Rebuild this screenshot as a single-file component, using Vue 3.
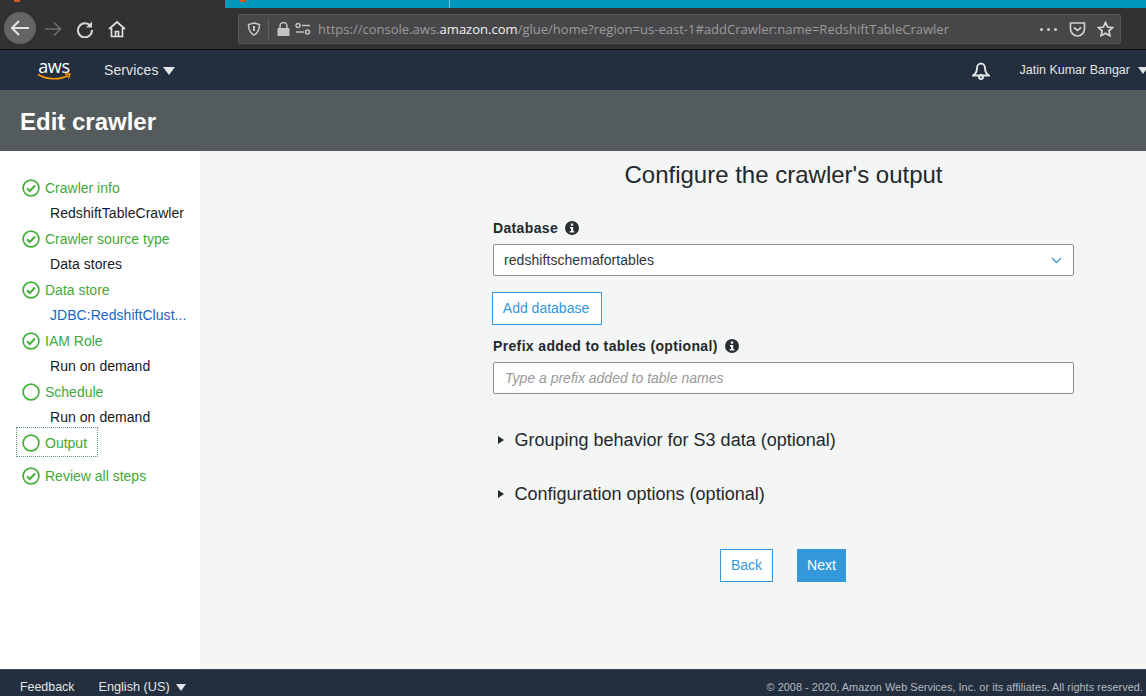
<script setup>
const steps = [
  { label: 'Crawler info', sub: 'RedshiftTableCrawler', done: true },
  { label: 'Crawler source type', sub: 'Data stores', done: true },
  { label: 'Data store', sub: 'JDBC:RedshiftClust...', done: true, link: true },
  { label: 'IAM Role', sub: 'Run on demand', done: true },
  { label: 'Schedule', sub: 'Run on demand', done: false },
  { label: 'Output', done: false, focus: true },
  { label: 'Review all steps', done: true, last: true },
]
</script>

<template>
  <div class="page">
    <div class="tabs">
      <div class="tabs-left"><span class="fav"></span></div>
      <div class="tab-active"><span class="fav fav2"></span></div>
      <div class="tab-rest"></div>
    </div>
    <div class="toolbar">
      <div class="back">
        <svg width="24" height="24" viewBox="0 0 24 24" fill="none" stroke="#e4e4e4" stroke-width="2"><path d="M21 12H4M11 5l-7 7 7 7"/></svg>
      </div>
      <svg class="fwd" width="18" height="18" viewBox="0 0 18 18" fill="none" stroke="#6e6e6e" stroke-width="1.7"><path d="M1 9h15M10 2.500l6.500 6.500-6.500 6.500"/></svg>
      <svg class="reload" width="18" height="18" viewBox="0 0 18 18" fill="none" stroke="#d8d8d8" stroke-width="2"><path d="M14.500 6A7 7 0 1 0 16 10"/><path d="M16 1.500v6h-6" fill="#d8d8d8" stroke="none"/></svg>
      <svg class="home" width="18" height="18" viewBox="0 0 18 18" fill="none" stroke="#e0e0e0" stroke-width="1.700"><path d="M1 9l8-7 8 7M3.500 8v8.500h11V8"/><path d="M7.500 16.500v-5h3v5"/></svg>
      <div class="urlbar">
        <svg class="shield" width="14" height="14" viewBox="0 0 14 14" fill="none" stroke="#c8c8c8" stroke-width="1.500"><path d="M7 1l5.500 1.500c0 5-1.500 8.500-5.500 10.500C3 11 1.500 7.500 1.500 2.500z"/><path d="M7 4v5" stroke-width="2"/></svg>
        <span class="sep"></span>
        <svg class="lock" width="13" height="14" viewBox="0 0 13 14"><path d="M3 6V4a3.500 3.500 0 0 1 7 0v2" fill="none" stroke="#c4c4c4" stroke-width="1.500"/><rect x="0.500" y="6" width="12" height="8" rx="1" fill="#c4c4c4"/></svg>
        <svg class="perm" width="16" height="14" viewBox="0 0 16 14" fill="none" stroke="#c0c0c0" stroke-width="1.500"><circle cx="3" cy="3.500" r="2"/><path d="M7 3.500h8M1 10h8"/><circle cx="12.500" cy="10" r="2"/></svg>
        <span class="url">https://console.aws.<b>amazon.com</b>/glue/home?region=us-east-1#addCrawler:name=RedshiftTableCrawler</span>
        <span class="dots"><i></i><i></i><i></i></span>
        <svg class="pocket" width="17" height="15" viewBox="0 0 17 15" fill="none" stroke="#cfcfcf" stroke-width="1.700"><path d="M1.500 1h14v6a6.500 6.500 0 0 1-14 0z"/><path d="M5 5.500l3.500 3 3.500-3"/></svg>
        <svg class="star" width="17" height="16" viewBox="0 0 17 16" fill="none" stroke="#d8d8d8" stroke-width="1.700"><path d="M8.500 1.500l2.100 4.500 4.900.6-3.600 3.300 1 4.800-4.400-2.400-4.400 2.400 1-4.800L1.500 6.600l4.900-.6z"/></svg>
      </div>
    </div>

    <nav class="nav">
      <div class="logo">
        <span class="logo-text">aws</span>
        <svg width="34" height="8" viewBox="0 0 34 8" fill="none"><path d="M1 1.500C10 7 23 7 31 2.500" stroke="#f90" stroke-width="1.600"/><path d="M28 1h5l-1.500 4.500" stroke="#f90" stroke-width="1.300"/></svg>
      </div>
      <span class="services">Services</span>
      <span class="caret"></span>
      <span class="spacer"></span>
      <svg class="bell" width="18" height="18" viewBox="0 0 18 18" fill="none" stroke="#e2e4e6" stroke-width="1.900"><path d="M1 13.500c2.500-1.500 4-4 4-7.500 0-2.500 1.800-4.500 4-4.500s4 2 4 4.500c0 3.500 1.500 6 4 7.500z"/><circle cx="9" cy="15" r="2"/></svg>
      <span class="user">Jatin Kumar Bangar</span>
      <span class="caret small"></span>
    </nav>

    <header class="head"><h1>Edit crawler</h1></header>

    <main class="body">
      <aside class="side">
        <template v-for="s in steps" :key="s.label">
          <div class="step" :class="{ focus: s.focus, last: s.last }">
            <svg class="mark" width="18" height="18" viewBox="0 0 18 18" fill="none">
              <circle cx="9" cy="9" r="7.900" stroke="#44b03b" stroke-width="1.700"/>
              <path v-if="s.done" d="M5 9.300l2.800 2.700L13 6.500" stroke="#44b03b" stroke-width="2"/>
            </svg>
            <span>{{ s.label }}</span>
          </div>
          <div v-if="s.sub" class="sub" :class="{ link: s.link }">{{ s.sub }}</div>
        </template>
      </aside>

      <section class="content">
        <h2>Configure the crawler's output</h2>
        <div class="form">
          <label class="lbl">Database
            <svg class="info" width="14" height="14" viewBox="0 0 14 14"><circle cx="7" cy="7" r="7" fill="#2a2e33"/><rect x="5.800" y="2.500" width="2.400" height="2.200" fill="#f4f6f6"/><path d="M5 6h3.200v4H9.300v1.500H4.800V10H6V7.400H5z" fill="#f4f6f6"/></svg>
          </label>
          <div class="select">
            <span>redshiftschemafortables</span>
            <svg width="11" height="7" viewBox="0 0 11 7" fill="none" stroke="#3f97d6" stroke-width="1.300"><path d="M1 1l4.500 4.500L10 1"/></svg>
          </div>
          <button class="btn add">Add database</button>
          <label class="lbl lbl2">Prefix added to tables (optional)
            <svg class="info" width="14" height="14" viewBox="0 0 14 14"><circle cx="7" cy="7" r="7" fill="#2a2e33"/><rect x="5.800" y="2.500" width="2.400" height="2.200" fill="#f4f6f6"/><path d="M5 6h3.200v4H9.300v1.500H4.800V10H6V7.400H5z" fill="#f4f6f6"/></svg>
          </label>
          <div class="input">Type a prefix added to table names</div>
          <div class="expander first"><span class="tri"></span>Grouping behavior for S3 data (optional)</div>
          <div class="expander"><span class="tri"></span>Configuration options (optional)</div>
          <div class="actions">
            <button class="btn back-btn">Back</button>
            <button class="btn next">Next</button>
          </div>
        </div>
      </section>
    </main>

    <footer class="foot">
      <span class="fb">Feedback</span>
      <span class="lang">English (US)</span>
      <span class="caret small foot-caret"></span>
      <span class="spacer"></span>
      <span class="copy">© 2008 - 2020, Amazon Web Services, Inc. or its affiliates. All rights reserved.</span>
    </footer>
  </div>
</template>

<style>
html, body { margin: 0; overflow: hidden; }
</style>

<style scoped>
.page { width: 1146px; height: 696px; display: flex; flex-direction: column; font-family: "Liberation Sans", Arial, sans-serif; overflow: hidden; background: #f4f6f6; }
.tabs { height: 8px; display: flex; flex: none; background: #323234; }
.tabs-left { width: 225px; position: relative; }
.tab-active { width: 224px; background: #0097bd; position: relative; }
.tab-rest { flex: 1; background: #0097bd; border-left: 1px solid #7cc4d8; }
.fav { position: absolute; left: 14px; top: 0; width: 6px; height: 2px; background: #d8591c; }
.fav2 { left: 15px; }
.toolbar { height: 41px; flex: none; background: #323234; border-bottom: 1px solid #0c0c0d; display: flex; align-items: center; position: relative; }
.back { width: 32px; height: 32px; border-radius: 50%; background: #646466; margin-left: 4px; display: flex; align-items: center; justify-content: center; margin-top: -1px; }
.fwd { margin-left: 8px; }
.reload { margin-left: 14px; }
.home { margin-left: 14px; }
.urlbar { margin-left: 112px; width: 883px; height: 30px; box-sizing: border-box; background: #474749; border: 1px solid #565658; border-radius: 2px; display: flex; align-items: center; margin-top: 1px; }
.shield { margin-left: 8px; flex: none; }
.sep { width: 1px; height: 22px; background: #5e5e60; margin-left: 7px; flex: none; }
.lock { margin-left: 8px; flex: none; }
.perm { margin-left: 5px; flex: none; }
.url { margin-left: 7px; font-family: "Open Sans", sans-serif; font-size: 13.040px; color: #9a9a9b; white-space: nowrap; flex: 1; }
.url b { font-weight: 400; color: #f0f0f0; }
.dots { display: flex; gap: 3px; margin-right: 12px; }
.dots i { width: 3px; height: 3px; border-radius: 50%; background: #cfcfcf; margin-left: 1px; }
.pocket { margin-right: 11px; flex: none; }
.star { margin-right: 6px; flex: none; }

.nav { height: 40px; flex: none; background: #232f3e; display: flex; align-items: center; color: #e2e4e6; }
.logo { margin-left: 36px; width: 36px; display: flex; flex-direction: column; align-items: center; }
.logo-text { font-family: "Open Sans", sans-serif; font-size: 18px; line-height: 14px; color: #fff; letter-spacing: -0.3px; }
.services { margin-left: 32px; font-size: 14px; letter-spacing: 0.1px; }
.caret { margin-left: 5px; margin-top: 1px; width: 0; height: 0; border-left: 6px solid transparent; border-right: 6px solid transparent; border-top: 8px solid #e2e4e6; }
.caret.small { border-left-width: 5px; border-right-width: 5px; border-top-width: 7px; }
.spacer { flex: 1; }
.bell { margin-right: 30px; margin-top: 2px; }
.user { font-size: 12.500px; }
.nav .caret.small { margin-right: -2px; margin-left: 8px; }

.head { height: 61px; flex: none; background: #545b5c; display: flex; align-items: center; }
.head h1 { margin: 2px 0 0 20px; font-size: 24px; font-weight: 700; color: #fff; }

.body { flex: 1; display: flex; min-height: 0; }
.side { width: 200px; flex: none; background: #fff; box-sizing: border-box; padding-top: 24px; }
.step { display: flex; align-items: center; height: 26px; margin-left: 16px; padding-left: 6px; width: 82px; box-sizing: border-box; color: #3fa93a; font-size: 14px; white-space: nowrap; gap: 5px; line-height: 26px; }
.mark { flex: none; }
.step.focus { height: 30px; outline: 1px dotted #6a9a76; outline-offset: -1px; margin-top: -3px; padding-top: 2px; }
.step.last { margin-top: 6px; }
.sub { margin-left: 50px; font-size: 14px; color: #16191f; height: 25px; line-height: 25px; white-space: nowrap; letter-spacing: 0.05px; }
.sub.link { color: #1a66c0; }

.content { flex: 1; padding-left: 293px; }
.content h2 { margin: 0; width: 581px; text-align: center; font-size: 24px; font-weight: 400; color: #23282c; line-height: 28px; padding-top: 10px; }
.form { width: 581px; padding-top: 29px; }
.lbl { display: flex; align-items: center; gap: 7px; font-size: 14px; font-weight: 700; color: #23282c; height: 20px; letter-spacing: 0.35px; }
.lbl2 { margin-top: 11px; }
.select, .input { height: 32px; box-sizing: border-box; background: #fff; border: 1px solid #8a8f8f; border-radius: 2px; display: flex; align-items: center; font-size: 14px; margin-top: 6px; padding: 0 11px 0 10px; color: #333; }
.select { justify-content: space-between; letter-spacing: 0.06px; }
.input { font-style: italic; color: #999; padding-left: 11px; }
.btn { font-family: inherit; font-size: 14px; box-sizing: border-box; border-radius: 0; padding: 0 0 2px; }
.add { display: block; margin-top: 16px; margin-left: -1px; width: 110px; height: 33px; background: #fff; border: 1px solid #3498db; color: #3498db; padding-right: 2px; }
.expander { font-size: 18px; color: #23282c; display: flex; align-items: center; height: 24px; margin-top: 30px; }
.expander.first { margin-top: 34px; }
.tri { width: 0; height: 0; border-top: 4.500px solid transparent; border-bottom: 4.500px solid transparent; border-left: 6px solid #23282c; margin-left: 5px; margin-right: 10.500px; }
.actions { display: flex; gap: 24px; margin-top: 43px; margin-left: 227px; }
.back-btn { width: 53px; height: 33px; background: #fff; border: 1px solid #3498db; color: #3498db; }
.next { width: 49px; height: 33px; background: #3498db; border: 1px solid #3498db; color: #fff; }

.foot { height: 27px; flex: none; background: #232f3e; display: flex; align-items: center; color: #e2e4e6; font-size: 12.400px; border-top: 1px solid #3a4552; box-sizing: border-box; padding-top: 8px; }
.fb { margin-left: 20px; }
.lang { margin-left: 24px; font-size: 12.700px; }
.foot-caret { margin-left: 6px; }
.copy { font-size: 10.850px; color: #b5bac0; margin-right: 3px; letter-spacing: 0.06px; }
</style>
